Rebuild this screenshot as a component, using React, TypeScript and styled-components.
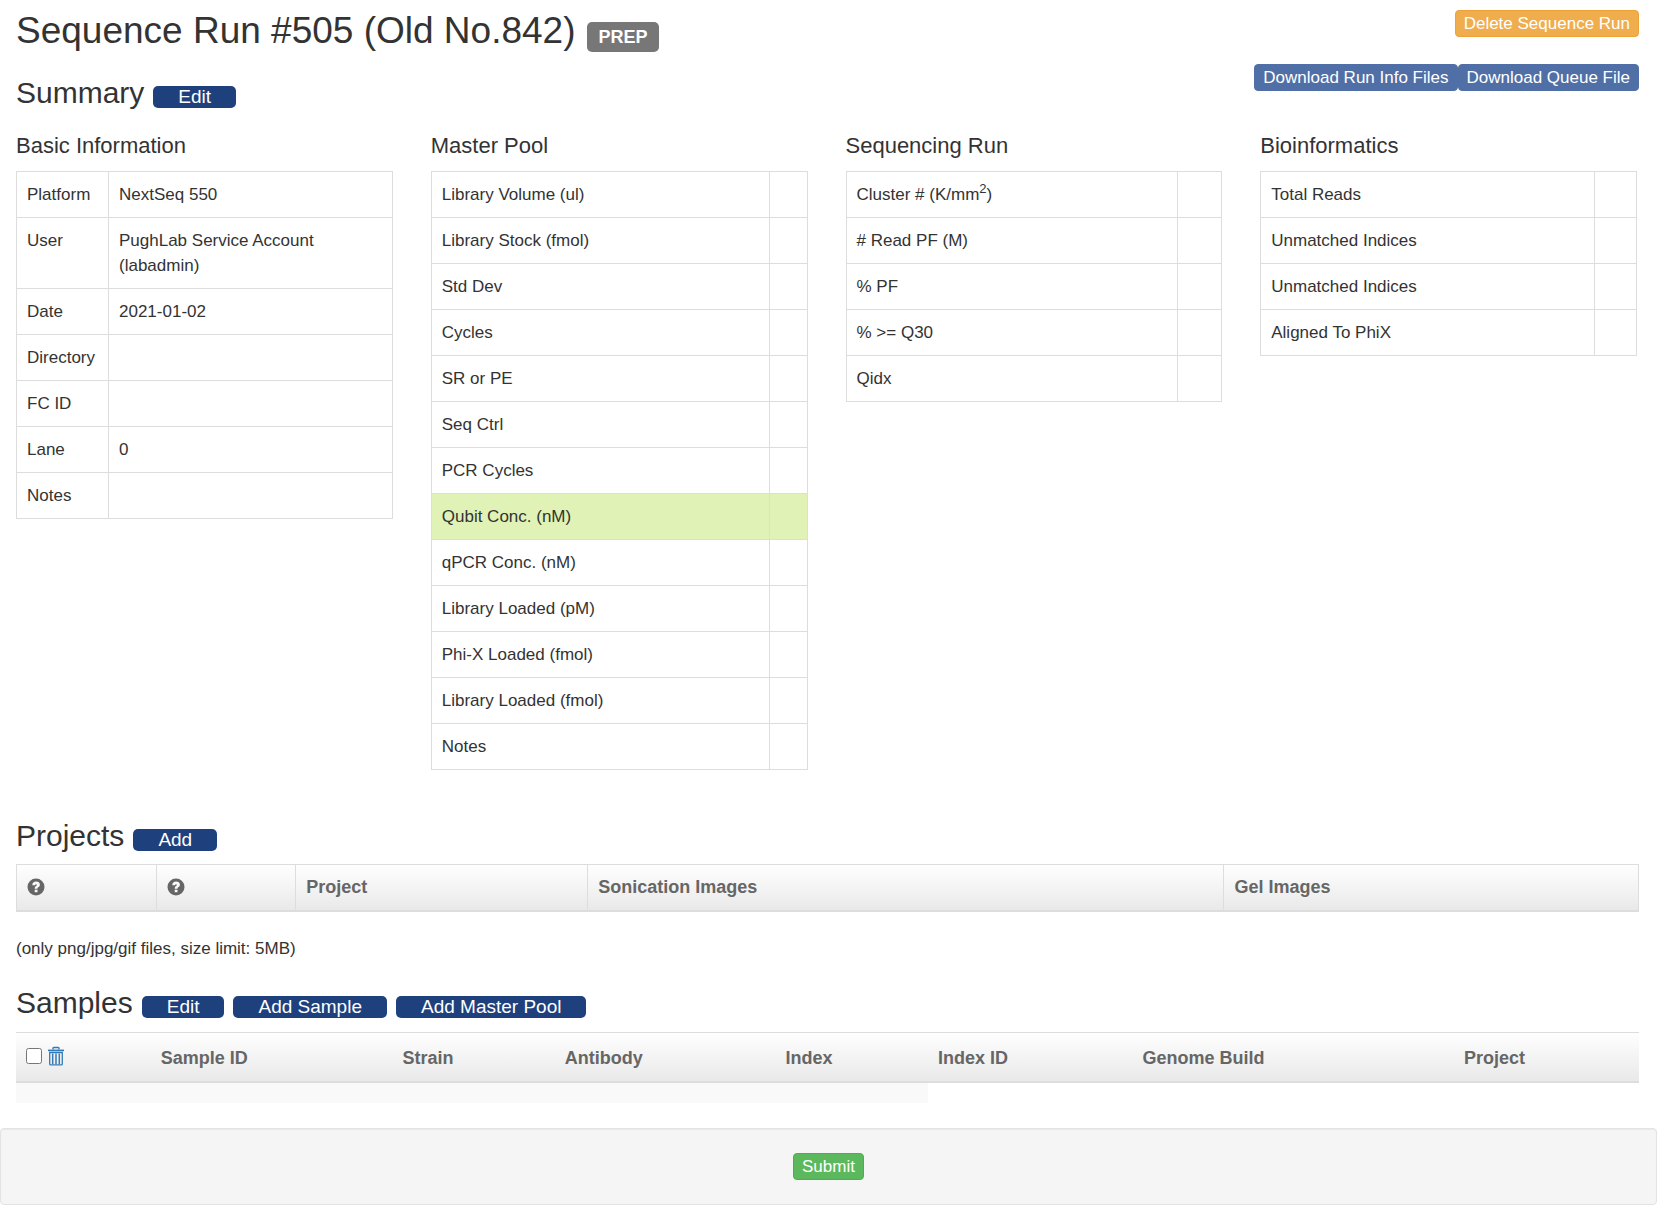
import React from "react";
import styled, { createGlobalStyle } from "styled-components";

const GlobalStyle = createGlobalStyle`
  *, *::before, *::after { box-sizing: border-box; }
  body {
    margin: 0;
    background: #fff;
    color: #333;
    font-family: "Liberation Sans", Helvetica, Arial, sans-serif;
    font-size: 17px;
    line-height: 25px;
  }
`;

const Page = styled.div`
  display: flex;
  flex-direction: column;
`;

const Header = styled.header`
  display: flex;
  justify-content: space-between;
  align-items: flex-start;
  padding: 10px 20px 0 16px;
`;

const Titles = styled.div`
  display: flex;
  flex-direction: column;
  gap: 24px;
`;

const TitleRow = styled.div`
  display: flex;
  align-items: baseline;
  gap: 12px;
`;

const Title = styled.h1`
  margin: 0;
  font-size: 37px;
  font-weight: 400;
  line-height: 42px;
`;

const StatusLabel = styled.span`
  padding: 0 11px;
  border-radius: 5px;
  background: #777;
  color: #fff;
  font-size: 18px;
  font-weight: 700;
  line-height: 30px;
`;

const SectionHead = styled.div`
  display: flex;
  align-items: baseline;
  gap: 9px;
`;

const SectionTitle = styled.h2`
  margin: 0;
  font-size: 30px;
  font-weight: 400;
  line-height: 34px;
`;

const NavyButton = styled.button`
  padding: 0 25px;
  border: 0;
  border-radius: 5px;
  background: #1e407c;
  color: #fff;
  font-family: inherit;
  font-size: 19px;
  line-height: 22px;
`;

const Actions = styled.div`
  display: flex;
  flex-direction: column;
  align-items: flex-end;
  gap: 27px;
`;

const ActionGroup = styled.div`
  display: flex;
`;

const tones = {
  warning: ["#f0ad4e", "#eea236"],
  info: ["#4f6fa6", "#4f6fa6"],
  success: ["#5cb85c", "#4cae4c"],
};

const SmallButton = styled.button<{ $tone: keyof typeof tones }>`
  padding: 0 8px;
  border: 1px solid ${(p) => tones[p.$tone][1]};
  border-radius: 4px;
  background: ${(p) => tones[p.$tone][0]};
  color: #fff;
  font-family: inherit;
  font-size: 17px;
  line-height: 25px;
`;

const SummaryGrid = styled.div`
  display: grid;
  grid-template-columns: repeat(4, 1fr);
  padding-top: 23px;
`;

const Panel = styled.section`
  padding: 0 22px 0 16px;
`;

const PanelTitle = styled.h3`
  margin: 0 0 12px;
  font-size: 22px;
  font-weight: 400;
  line-height: 26px;
`;

const InfoTable = styled.table`
  width: 100%;
  border-collapse: collapse;
  color: #333;
  font-size: 17px;
`;

const InfoRow = styled.tr<{ $highlight?: boolean }>`
  background: ${(p) => (p.$highlight ? "#e0f2b6" : "transparent")};
`;

const InfoLabel = styled.th<{ $fit?: boolean }>`
  width: ${(p) => (p.$fit ? "92px" : "auto")};
  height: 46px;
  padding: 10px;
  border: 1px solid #ddd;
  font-weight: 400;
  text-align: left;
  vertical-align: top;
  white-space: nowrap;
`;

const InfoValue = styled.td<{ $width?: number }>`
  width: ${(p) => (p.$width ? p.$width + "px" : "auto")};
  padding: 10px;
  border: 1px solid #ddd;
  vertical-align: top;
`;

const Sup = styled.sup`
  font-size: 13px;
  line-height: 0;
`;

const Block = styled.section`
  display: flex;
  flex-direction: column;
  padding: 0 20px 0 16px;
`;

const Projects = styled(Block)`
  gap: 11px;
  padding-top: 49px;
`;

const Samples = styled(Block)`
  gap: 12px;
  padding-top: 25px;
`;

const ListTable = styled.table<{ $bordered?: boolean }>`
  width: 100%;
  table-layout: fixed;
  border-collapse: separate;
  border-spacing: 0;
  color: #666;
  font-size: 18px;

  thead tr {
    background: linear-gradient(#fff, #e8e8e8);
  }
  th {
    border: 0 solid #ddd;
    border-width: ${(p) => (p.$bordered ? "1px 0 2px 1px" : "1px 0 2px")};
  }
  th:last-child {
    border-right-width: ${(p) => (p.$bordered ? "1px" : "0")};
  }
`;

const HeadCell = styled.th<{ $width: number; $tall?: boolean }>`
  width: ${(p) => p.$width}%;
  height: ${(p) => (p.$tall ? "51px" : "48px")};
  padding: ${(p) => (p.$tall ? "2px 10px 0" : "0 10px")};
  font-weight: 700;
  text-align: left;
  vertical-align: middle;
  white-space: nowrap;
`;

const EmptyCell = styled.td`
  height: 20px;
  padding: 0;
  background: #f9f9f9;
`;

const Tools = styled.div`
  display: flex;
  align-items: center;
  gap: 6px;
  padding-bottom: 4px;
`;

const CheckBox = styled.input`
  width: 16px;
  height: 16px;
  margin: 0;
`;

const IconButton = styled.button`
  display: flex;
  padding: 0;
  border: 0;
  background: none;
  color: #337ab7;
`;

const HelpIcon = styled.svg`
  display: block;
`;

const Note = styled.p`
  margin: 0;
  padding: 24px 20px 0 16px;
`;

const Footer = styled.footer`
  display: flex;
  justify-content: center;
  margin: 25px 2px 0 0;
  padding: 24px;
  border: 1px solid #e3e3e3;
  border-radius: 4px;
  background: #f5f5f5;
  box-shadow: inset 0 1px 1px rgba(0, 0, 0, 0.05);
`;

function Help() {
  return (
    <HelpIcon width="18" height="20" viewBox="0 1 18 20" role="img" aria-label="Help">
      <circle cx="9" cy="10" r="8.5" fill="#666" />
      <path
        d="M5.300 8.300C5.300 5.800 6.900 4.600 9.100 4.600c2.200 0 3.800 1.200 3.800 3.200 0 2.400-2.400 2.300-2.400 3.700v.3H7.700v-.6c0-2.100 2.100-2.100 2.100-3.200 0-.5-.3-.8-.8-.8-.6 0-.9.400-.9 1.100z"
        fill="#f8f8f8"
      />
      <rect x="7.700" y="12.700" width="2.800" height="2.500" fill="#f8f8f8" />
    </HelpIcon>
  );
}

function Trash() {
  return (
    <svg width="16" height="20" viewBox="0 0 16 20" fill="none" stroke="currentColor" aria-hidden="true">
      <path d="M5 3.500V2.300a.8.8 0 0 1 .8-.8h4.400a.8.8 0 0 1 .8.800v1.200" strokeWidth="1.400" />
      <path d="M0 4.400h16" strokeWidth="1.600" />
      <path d="M1.700 6.500h12.600v11.400a1 1 0 0 1-1 1H2.700a1 1 0 0 1-1-1z" strokeWidth="1.300" />
      <path d="M4.700 7.500v10.500M8 7.500v10.500M11.300 7.500v10.500" strokeWidth="1.500" />
    </svg>
  );
}

type Row = { label: React.ReactNode; value?: string; highlight?: boolean };

const rows = (...labels: React.ReactNode[]): Row[] => labels.map((label) => ({ label }));

const panels: { title: string; valueWidth?: number; rows: Row[] }[] = [
  {
    title: "Basic Information",
    rows: [
      { label: "Platform", value: "NextSeq 550" },
      { label: "User", value: "PughLab Service Account (labadmin)" },
      { label: "Date", value: "2021-01-02" },
      { label: "Directory" },
      { label: "FC ID" },
      { label: "Lane", value: "0" },
      { label: "Notes" },
    ],
  },
  {
    title: "Master Pool",
    valueWidth: 38,
    rows: [
      ...rows(
        "Library Volume (ul)",
        "Library Stock (fmol)",
        "Std Dev",
        "Cycles",
        "SR or PE",
        "Seq Ctrl",
        "PCR Cycles"
      ),
      { label: "Qubit Conc. (nM)", highlight: true },
      ...rows(
        "qPCR Conc. (nM)",
        "Library Loaded (pM)",
        "Phi-X Loaded (fmol)",
        "Library Loaded (fmol)",
        "Notes"
      ),
    ],
  },
  {
    title: "Sequencing Run",
    valueWidth: 44,
    rows: rows(
      <>
        Cluster # (K/mm<Sup>2</Sup>)
      </>,
      "# Read PF (M)",
      "% PF",
      "% >= Q30",
      "Qidx"
    ),
  },
  {
    title: "Bioinformatics",
    valueWidth: 42,
    rows: rows("Total Reads", "Unmatched Indices", "Unmatched Indices", "Aligned To PhiX"),
  },
];

const projectColumns: [React.ReactNode, number][] = [
  [<Help />, 8.6],
  [<Help />, 8.6],
  ["Project", 18],
  ["Sonication Images", 39.2],
  ["Gel Images", 25.6],
];

const sampleColumns: [string, number][] = [
  ["Sample ID", 14.9],
  ["Strain", 10],
  ["Antibody", 13.6],
  ["Index", 9.4],
  ["Index ID", 12.6],
  ["Genome Build", 19.8],
  ["Project", 11.4],
];

export default function App() {
  return (
    <Page>
      <GlobalStyle />
      <Header>
        <Titles>
          <TitleRow>
            <Title>Sequence Run #505 (Old No.842)</Title>
            <StatusLabel>PREP</StatusLabel>
          </TitleRow>
          <SectionHead>
            <SectionTitle>Summary</SectionTitle>
            <NavyButton type="button">Edit</NavyButton>
          </SectionHead>
        </Titles>
        <Actions>
          <SmallButton type="button" $tone="warning">Delete Sequence Run</SmallButton>
          <ActionGroup>
            <SmallButton type="button" $tone="info">Download Run Info Files</SmallButton>
            <SmallButton type="button" $tone="info">Download Queue File</SmallButton>
          </ActionGroup>
        </Actions>
      </Header>

      <SummaryGrid>
        {panels.map((panel) => (
          <Panel key={panel.title}>
            <PanelTitle>{panel.title}</PanelTitle>
            <InfoTable>
              <tbody>
                {panel.rows.map((row, i) => (
                  <InfoRow key={i} $highlight={row.highlight}>
                    <InfoLabel scope="row" $fit={!panel.valueWidth}>{row.label}</InfoLabel>
                    <InfoValue $width={panel.valueWidth}>{row.value}</InfoValue>
                  </InfoRow>
                ))}
              </tbody>
            </InfoTable>
          </Panel>
        ))}
      </SummaryGrid>

      <Projects>
        <SectionHead>
          <SectionTitle>Projects</SectionTitle>
          <NavyButton type="button">Add</NavyButton>
        </SectionHead>
        <ListTable $bordered>
          <thead>
            <tr>
              {projectColumns.map(([label, width], i) => (
                <HeadCell key={i} $width={width}>{label}</HeadCell>
              ))}
            </tr>
          </thead>
        </ListTable>
      </Projects>

      <Note>(only png/jpg/gif files, size limit: 5MB)</Note>

      <Samples>
        <SectionHead>
          <SectionTitle>Samples</SectionTitle>
          <NavyButton type="button">Edit</NavyButton>
          <NavyButton type="button">Add Sample</NavyButton>
          <NavyButton type="button">Add Master Pool</NavyButton>
        </SectionHead>
        <ListTable>
          <thead>
            <tr>
              <HeadCell $width={8.3} $tall>
                <Tools>
                  <CheckBox type="checkbox" aria-label="Select all samples" />
                  <IconButton type="button" aria-label="Remove selected samples">
                    <Trash />
                  </IconButton>
                </Tools>
              </HeadCell>
              {sampleColumns.map(([label, width]) => (
                <HeadCell key={label} $width={width} $tall>{label}</HeadCell>
              ))}
            </tr>
          </thead>
          <tbody>
            <tr>
              <EmptyCell colSpan={5} />
            </tr>
          </tbody>
        </ListTable>
      </Samples>

      <Footer>
        <SmallButton type="submit" $tone="success">Submit</SmallButton>
      </Footer>
    </Page>
  );
}
